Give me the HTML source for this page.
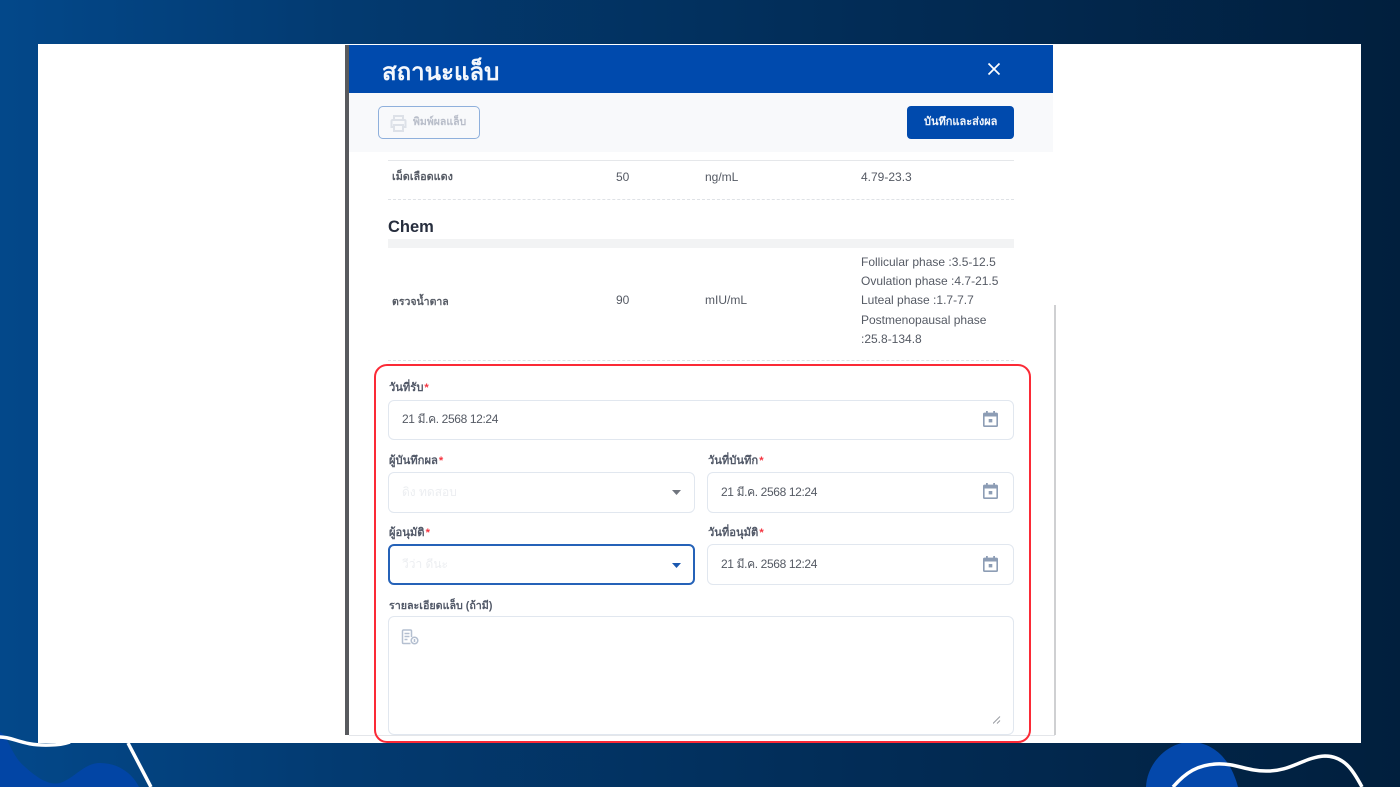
<!DOCTYPE html>
<html lang="th"><head><meta charset="utf-8"><title>สถานะแล็บ</title>
<style>
*{box-sizing:border-box}
html,body{margin:0;padding:0}
body{width:1400px;height:787px;position:relative;overflow:hidden;background:linear-gradient(90deg,#03488a 0%,#033a70 25%,#022c56 62%,#011f3d 100%);font-family:"Liberation Sans","Noto Sans CJK SC",sans-serif;color:#3d4450}
.a{position:absolute}
.t{position:absolute;white-space:nowrap;line-height:1}
.f{position:absolute;background:#fff;border:1.5px solid #e1e7ef;border-radius:6px}
.l{position:absolute;white-space:nowrap;font-size:11.2px;font-weight:700;color:#525968;line-height:14px}
.l i{color:#f5333f;font-style:normal;margin-left:1px}
.v{position:absolute;white-space:nowrap;font-size:12px;color:#555a64;line-height:14px}
.dt{letter-spacing:-.37px}
.th{position:absolute;white-space:nowrap;font-size:10.8px;font-weight:700;color:#565b65;line-height:14px}
.h{position:absolute;height:1px;left:388px;width:626px}
.d{border-top:1px dashed #dfe2e6}
</style></head><body>
<svg class="a" style="left:0;top:0" width="1400" height="787" viewBox="0 0 1400 787" fill="none">
<path d="M0 732C8 735 11 755 24 766C34 775 47 786 60 783C75 778 84 763 100 763C120 763 133 775 139 787H0Z" fill="#0245a5"/>
<path d="M0 737C14 737 22 746 50 745C58 745 64 744 70 742" stroke="#fff" stroke-width="3.500"/>
<path d="M128 743L151 787" stroke="#fff" stroke-width="3.500"/>
<path d="M1146 787C1147 762 1169 742 1190 742C1214 742 1231 760 1238 787Z" fill="#0448ab"/>
<path d="M1173 787C1186 772 1198 765 1216 764C1236 763 1246 771 1266 771C1290 772 1304 757 1325 756C1345 756 1354 772 1362 787" stroke="#fff" stroke-width="3.500"/>
</svg>
<div class="a" style="left:38px;top:44px;width:1323px;height:699px;background:#fff"></div>
<div class="a" style="left:345px;top:45px;width:4px;height:690px;background:#585a5e"></div>
<div class="a" style="left:349px;top:45px;width:704px;height:48px;background:#004aad"></div>
<div class="t" style="left:382px;top:59px;font-size:24px;font-weight:700;color:#f4f7fc;line-height:28px">สถานะแล็บ</div>
<svg class="a" style="left:987px;top:62px" width="14" height="14" viewBox="0 0 14 14"><path d="M1.500 1.500L12.500 12.500M12.500 1.500L1.500 12.500" stroke="#fff" stroke-width="1.700"/></svg>
<div class="a" style="left:349px;top:93px;width:704px;height:59px;background:#f8f9fb"></div>
<div class="a" style="left:378px;top:106px;width:102px;height:33px;border:1.700px solid #8fb0dc;border-radius:5px"></div>
<svg class="a" style="left:390px;top:114px" width="17" height="18" viewBox="0 0 17 18" fill="none" stroke="#dde1e8" stroke-width="2"><path d="M4 6V2h9v4"/><path d="M4 13H1.500V7a1 1 0 0 1 1-1h12a1 1 0 0 1 1 1v6H13"/><rect x="4" y="11" width="9" height="6"/></svg>
<div class="t" style="left:413px;top:115px;font-size:10.500px;font-weight:700;color:#b8bdc9;line-height:14px">พิมพ์ผลแล็บ</div>
<div class="a" style="left:907px;top:106px;width:107px;height:33px;background:#004aad;border-radius:4px"></div>
<div class="t" style="left:924px;top:115px;font-size:11px;font-weight:700;color:#f0f4fa;line-height:15px">บันทึกและส่งผล</div>
<div class="h" style="top:160px;background:#e5e7ea"></div>
<div class="th" style="left:392px;top:170px">เม็ดเลือดแดง</div>
<div class="v" style="left:616px;top:170px">50</div>
<div class="v" style="left:705px;top:170px">ng/mL</div>
<div class="v" style="left:861px;top:170px">4.79-23.3</div>
<div class="h d" style="top:199px"></div>
<div class="t" style="left:388px;top:218px;font-size:16.500px;font-weight:700;color:#262d3d;line-height:18px">Chem</div>
<div class="a" style="left:388px;top:239px;width:626px;height:9px;background:#f2f3f4"></div>
<div class="th" style="left:392px;top:295px;font-size:10.500px">ตรวจน้ำตาล</div>
<div class="v" style="left:616px;top:293px">90</div>
<div class="v" style="left:705px;top:293px">mIU/mL</div>
<div class="v" style="left:861px;top:255px">Follicular phase :3.5-12.5</div>
<div class="v" style="left:861px;top:274px">Ovulation phase :4.7-21.5</div>
<div class="v" style="left:861px;top:293px">Luteal phase :1.7-7.7</div>
<div class="v" style="left:861px;top:313px">Postmenopausal phase</div>
<div class="v" style="left:861px;top:332px">:25.8-134.8</div>
<div class="h d" style="top:360px"></div>
<div class="a" style="left:1054px;top:305px;width:2px;height:430px;background:#cfd0d2"></div>
<div class="a" style="left:349px;top:735px;width:706px;height:1px;background:#e4e6ea"></div>

<div class="l" style="left:389px;top:381px">วันที่รับ<i>*</i></div>
<div class="f" style="left:388px;top:400px;width:626px;height:40px"></div>
<div class="v dt" style="left:402px;top:412px">21 มี.ค. 2568 12:24</div>
<div class="l" style="left:389px;top:454px">ผู้บันทึกผล<i>*</i></div>
<div class="f" style="left:388px;top:472px;width:307px;height:41px"></div>
<div class="v" style="left:402px;top:485px;color:#eceef1">ดิง ทดสอบ</div>
<svg class="a" style="left:672px;top:490px" width="9" height="5"><path d="M0 0H9L4.500 5Z" fill="#70757e"/></svg>
<div class="l" style="left:708px;top:454px">วันที่บันทึก<i>*</i></div>
<div class="f" style="left:707px;top:472px;width:307px;height:41px"></div>
<div class="v dt" style="left:721px;top:485px">21 มี.ค. 2568 12:24</div>
<div class="l" style="left:389px;top:526px">ผู้อนุมัติ<i>*</i></div>
<div class="a" style="left:388px;top:544px;width:307px;height:41px;background:#fff;border:2px solid #2562b8;border-radius:6px"></div>
<div class="v" style="left:402px;top:557px;color:#eceef1">วีว่า ดีนะ</div>
<svg class="a" style="left:672px;top:563px" width="9" height="5"><path d="M0 0H9L4.500 5Z" fill="#1a58b0"/></svg>
<div class="l" style="left:708px;top:526px">วันที่อนุมัติ<i>*</i></div>
<div class="f" style="left:707px;top:544px;width:307px;height:41px"></div>
<div class="v dt" style="left:721px;top:557px">21 มี.ค. 2568 12:24</div>
<div class="l" style="left:389px;top:599px;font-size:10.700px">รายละเอียดแล็บ (ถ้ามี)</div>
<div class="f" style="left:388px;top:616px;width:626px;height:119px"></div>
<svg class="a" style="left:401px;top:629px" width="18" height="16" viewBox="0 0 18 16" fill="none" stroke="#b4bfd0" stroke-width="1.500"><path d="M9.500 14.500H2.500a1 1 0 0 1-1-1V2a1 1 0 0 1 1-1h7a1 1 0 0 1 1 1v6M3.500 4.500h5M3.500 7.500h5M3.500 10.500h3"/><circle cx="13.500" cy="11.500" r="3.300"/><path d="M13.500 10v3"/></svg>
<svg class="a" style="left:993px;top:716px" width="8" height="8"><path d="M0 7.500L7 .5M4 7.500L7 4.500" stroke="#9a9da3" stroke-width="1"/></svg>

<svg class="a" style="left:982.500px;top:411px" width="15" height="16" viewBox="0 0 15 16"><path d="M3 0h1.800v1.600h5.400V0H12v1.600h1.500A1.500 1.500 0 0 1 15 3.100v11.400a1.500 1.500 0 0 1-1.500 1.500h-12A1.500 1.500 0 0 1 0 14.500V3.100A1.500 1.500 0 0 1 1.500 1.600H3ZM1.600 5.500v8.900h11.800V5.500Z" fill="#8d9db5"/><rect x="5.700" y="8" width="3.600" height="3.400" fill="#8d9db5"/></svg>
<svg class="a" style="left:982.500px;top:483px" width="15" height="16" viewBox="0 0 15 16"><path d="M3 0h1.800v1.600h5.400V0H12v1.600h1.500A1.500 1.500 0 0 1 15 3.100v11.400a1.500 1.500 0 0 1-1.500 1.500h-12A1.500 1.500 0 0 1 0 14.500V3.100A1.500 1.500 0 0 1 1.500 1.600H3ZM1.600 5.500v8.900h11.800V5.500Z" fill="#8d9db5"/><rect x="5.700" y="8" width="3.600" height="3.400" fill="#8d9db5"/></svg>
<svg class="a" style="left:982.500px;top:556px" width="15" height="16" viewBox="0 0 15 16"><path d="M3 0h1.800v1.600h5.400V0H12v1.600h1.500A1.500 1.500 0 0 1 15 3.100v11.400a1.500 1.500 0 0 1-1.500 1.500h-12A1.500 1.500 0 0 1 0 14.500V3.100A1.500 1.500 0 0 1 1.500 1.600H3ZM1.600 5.500v8.900h11.800V5.500Z" fill="#8d9db5"/><rect x="5.700" y="8" width="3.600" height="3.400" fill="#8d9db5"/></svg>
<div class="a" style="left:374px;top:364px;width:657px;height:379px;border:2.700px solid #fb2a36;border-radius:13px"></div>
</body></html>
